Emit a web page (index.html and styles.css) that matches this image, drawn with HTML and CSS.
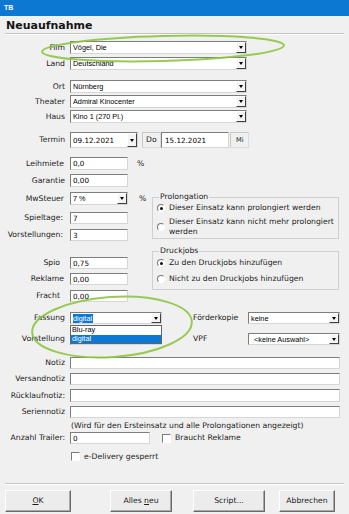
FILE: index.html
```html
<!DOCTYPE html>
<html lang="de">
<head>
<meta charset="utf-8">
<title>Neuaufnahme</title>
<link rel="stylesheet" href="styles.css">
</head>
<body>
<div class="titlebar">TB</div>
<h1 class="heading">Neuaufnahme</h1>
<div class="sep"></div>

<div class="form">
  <div class="row h13 mt6"><span class="lbl">Film</span><div class="field combo w177"><span class="val">Vögel, Die</span><span class="drop"></span></div></div>
  <div class="row h13 mt3"><span class="lbl">Land</span><div class="field combo w177"><span class="val">Deutschland</span><span class="drop"></span></div></div>

  <div class="row h13 mt10"><span class="lbl">Ort</span><div class="field combo w177"><span class="val">Nürnberg</span><span class="drop"></span></div></div>
  <div class="row h13 mt2"><span class="lbl">Theater</span><div class="field combo w177"><span class="val">Admiral Kinocenter</span><span class="drop"></span></div></div>
  <div class="row h13 mt2"><span class="lbl">Haus</span><div class="field combo w177"><span class="val">Kino 1 (270 Pl.)</span><span class="drop"></span></div></div>

  <div class="row h16 mt9">
    <span class="lbl">Termin</span>
    <div class="field combo num w68"><span class="val">09.12.2021</span><span class="drop"></span></div>
    <div class="daybox">Do</div>
    <div class="field num w68 pl3">15.12.2021</div>
    <div class="daybox mi">Mi</div>
  </div>

  <div class="section mt9">
    <div class="leftcol">
      <div class="row h13"><span class="lbl pr6">Leihmiete</span><div class="field num w58">0,0</div><span class="unit">%</span></div>
      <div class="row h13 mt4"><span class="lbl">Garantie</span><div class="field num w58">0,00</div></div>
      <div class="row h13 mt5"><span class="lbl pr6">MwSteuer</span><div class="field combo w58"><span class="val">7 %</span><span class="drop"></span></div><span class="unit u2">%</span></div>
      <div class="row h12 mt7"><span class="lbl pr7">Spieltage:</span><div class="field num w58">7</div></div>
      <div class="row h12 mt5"><span class="lbl pr7">Vorstellungen:</span><div class="field num w58">3</div></div>
      <div class="row h12 mt16"><span class="lbl pr10">Spio</span><div class="field num w58">0,75</div></div>
      <div class="row h12 mt4"><span class="lbl pr6">Reklame</span><div class="field num w58">0,00</div></div>
      <div class="row h12 mt5"><span class="lbl pr10">Fracht</span><div class="field num w58">0,00</div></div>
    </div>
    <div class="rightcol">
      <fieldset class="group">
        <legend>Prolongation</legend>
        <div class="opt first"><span class="radio on"></span><span>Dieser Einsatz kann prolongiert werden</span></div>
        <div class="opt two"><span class="radio"></span><span>Dieser Einsatz kann nicht mehr prolongiert<br>werden</span></div>
      </fieldset>
      <fieldset class="group g2">
        <legend>Druckjobs</legend>
        <div class="opt first"><span class="radio on"></span><span>Zu den Druckjobs hinzufügen</span></div>
        <div class="opt second"><span class="radio"></span><span>Nicht zu den Druckjobs hinzufügen</span></div>
      </fieldset>
    </div>
  </div>

  <div class="row h12 mt10">
    <span class="lbl">Fassung</span>
    <div class="field combo w92 anchor">
      <span class="val"><span class="sel">digital</span></span><span class="drop"></span>
      <div class="dropdown">
        <div class="item">Blu-ray</div>
        <div class="item active">digital</div>
      </div>
    </div>
    <span class="lbl2">Förderkopie</span>
    <div class="field combo w92"><span class="val">keine</span><span class="drop"></span></div>
  </div>
  <div class="row h12 mt9">
    <span class="lbl">Vorstellung</span>
    <div class="field combo w92"><span class="val"></span><span class="drop"></span></div>
    <span class="lbl2">VPF</span>
    <div class="field combo w92"><span class="val pl3">&lt;keine Auswahl&gt;</span><span class="drop"></span></div>
  </div>

  <div class="row h12 mt12"><span class="lbl">Notiz</span><div class="field w270"></div></div>
  <div class="row h12 mt4"><span class="lbl">Versandnotiz</span><div class="field w270"></div></div>
  <div class="row h13 mt4"><span class="lbl">Rücklaufnotiz:</span><div class="field w270"></div></div>
  <div class="row h12 mt4"><span class="lbl">Seriennotiz</span><div class="field w270"></div></div>
  <div class="hint mt2">(Wird für den Ersteinsatz und alle Prolongationen angezeigt)</div>
  <div class="row h12 mt1">
    <span class="lbl">Anzahl Trailer:</span><div class="field num w80">0</div>
    <span class="check cb1"></span><span class="checktext">Braucht Reklame</span>
  </div>
  <div class="row h11 mt7">
    <span class="lbl"></span><span class="check"></span><span class="checktext">e-Delivery gesperrt</span>
  </div>
</div>

<div class="sep bottom"></div>
<div class="buttons">
  <div class="btn b-ok"><span><u>O</u>K</span></div>
  <div class="btn b-neu"><span>Alles <u>n</u>eu</span></div>
  <div class="btn b-script"><span>Script...</span></div>
  <div class="btn b-cancel"><span>Abbrechen</span></div>
</div>

<svg class="annot" width="349" height="514" viewBox="0 0 349 514" aria-hidden="true">
  <ellipse cx="163" cy="48.5" rx="121" ry="12.5" transform="rotate(-1.5 163 48.5)"/>
  <ellipse cx="112" cy="327" rx="80" ry="30" transform="rotate(-4 112 327)"/>
</svg>
</body>
</html>
```

FILE: styles.css
```css
* { box-sizing: border-box; }
html, body { margin: 0; padding: 0; }
body {
  width: 349px;
  height: 514px;
  overflow: hidden;
  position: relative;
  background: #f0f0f0;
  font-family: "DejaVu Sans", Verdana, sans-serif;
  font-size: 7.7px;
  color: #222;
}

.titlebar {
  height: 16px;
  background: #0c78d2;
  color: #fff;
  font: bold 7px/8px "Liberation Sans", Arial, sans-serif;
  padding: 4px 0 0 4px;
}
.heading {
  margin: 3px 0 0 6px;
  font: bold 11px/13px "DejaVu Sans", Verdana, sans-serif;
  color: #151515;
}
.sep {
  margin: 1px 5px 0 5px;
  border-top: 1px solid #c4c4c4;
  border-bottom: 1px solid #ffffff;
}
.sep.bottom { margin-top: 21px; }

.form { display: flex; flex-direction: column; }
.row { display: flex; align-items: center; }
.h11 { height: 11px; }
.h12 { height: 12px; }
.h13 { height: 13px; }
.h16 { height: 16px; }
.mt1 { margin-top: 1px; }
.mt2 { margin-top: 2px; }
.mt3 { margin-top: 3px; }
.mt4 { margin-top: 4px; }
.mt5 { margin-top: 5px; }
.mt6 { margin-top: 6px; }
.mt7 { margin-top: 7px; }
.mt9 { margin-top: 9px; }
.mt10 { margin-top: 10px; }
.mt12 { margin-top: 12px; }
.mt16 { margin-top: 16px; }

.lbl {
  flex: none;
  width: 70px;
  padding-right: 5px;
  text-align: right;
  white-space: nowrap;
  line-height: 10px;
}
.pr6 { padding-right: 6px; }
.pr7 { padding-right: 7px; }
.pr10 { padding-right: 10px; }
.lbl2 {
  flex: none;
  width: 55px;
  margin-left: 31px;
  white-space: nowrap;
  line-height: 10px;
}

.field {
  flex: none;
  height: 100%;
  display: flex;
  align-items: center;
  background: #fff;
  border: 1px solid;
  border-color: #7d7d7d #d6d6d6 #d6d6d6 #7d7d7d;
  padding: 0 0 0 2px;
  font: 7.3px/9px "Liberation Sans", Arial, sans-serif;
  color: #000;
  white-space: nowrap;
}
.field.num { font-family: "DejaVu Sans", Verdana, sans-serif; font-size: 7.2px; }
.pl3 { padding-left: 3px; }
.w58 { width: 58px; }
.w68 { width: 68px; }
.w80 { width: 80px; }
.w92 { width: 92px; }
.w177 { width: 177px; }
.w270 { width: 270px; }

.combo .val { flex: 1; overflow: hidden; }
.drop {
  flex: none;
  position: relative;
  width: 10px;
  height: 100%;
  background: #f4f4f4;
  border-left: 1px solid #fff;
  border-top: 1px solid #fff;
  border-right: 1px solid #404040;
  border-bottom: 1px solid #404040;
  display: flex;
  align-items: center;
  justify-content: center;
}
.drop::after {
  content: "";
  width: 0;
  height: 0;
  border-left: 2.5px solid transparent;
  border-right: 2.5px solid transparent;
  border-top: 3px solid #000;
}

.daybox {
  flex: none;
  width: 19px;
  height: 16px;
  margin-left: 4px;
  padding-left: 3px;
  border: 1px solid;
  border-color: #c8c8c8 #dcdcdc #dcdcdc #c8c8c8;
  display: flex;
  align-items: center;
  line-height: 10px;
}
.daybox.mi {
  margin-left: 1px;
  padding-left: 5px;
  font-size: 6.6px;
}

.unit { margin-left: 9px; line-height: 10px; }
.unit.u2 { margin-left: 11px; }

.section { display: flex; align-items: flex-start; }
.leftcol { width: 152px; flex: none; display: flex; flex-direction: column; }
.rightcol { width: 187px; flex: none; margin-top: 35px; display: flex; flex-direction: column; }

.group {
  margin: 0;
  padding: 1px 4px 1px 4px;
  border: 1px solid #cfcfcf;
  min-width: 0;
}
.group.g2 { margin-top: 7px; padding-bottom: 5px; padding-top: 2px; }
.group legend {
  padding: 0 1px;
  margin-left: 2px;
  line-height: 10px;
}
.opt { display: flex; align-items: center; line-height: 10px; }
.opt.two { margin-top: 4px; }
.opt.second { margin-top: 6px; }
.radio {
  flex: none;
  width: 8px;
  height: 8px;
  margin-right: 4px;
  border-radius: 50%;
  background: #fff;
  border: 1px solid;
  border-color: #7a7a7a #ffffff #ffffff #7a7a7a;
  display: flex;
  align-items: center;
  justify-content: center;
}
.radio.on::after {
  content: "";
  width: 3px;
  height: 3px;
  border-radius: 50%;
  background: #111;
}

.anchor { position: relative; }
.sel { background: #0a78d7; color: #fff; padding: 0 1px 0 0; }
.dropdown {
  position: absolute;
  top: 12px;
  left: -1px;
  width: 92px;
  height: 19px;
  background: #fff;
  border: 1px solid #646464;
  z-index: 2;
}
.item {
  height: 8.5px;
  line-height: 8.5px;
  padding-left: 1px;
  font: 7.3px/8.5px "Liberation Sans", Arial, sans-serif;
  color: #000;
}
.item.active { background: #0a78d7; color: #fff; }

.hint { padding-left: 71px; line-height: 11px; height: 11px; white-space: nowrap; }

.check {
  flex: none;
  width: 9px;
  height: 9px;
  background: #fff;
  border: 1px solid;
  border-color: #7a7a7a #ffffff #ffffff #7a7a7a;
  margin-right: 4px;
  margin-left: 1px;
}
.check.cb1 { margin-left: 12px; }
.checktext { line-height: 10px; white-space: nowrap; }

.buttons { display: flex; margin-top: 5px; height: 22px; }
.btn {
  flex: none;
  height: 22px;
  background: #ececec;
  border-left: 1px solid #fdfdfd;
  border-top: 1px solid #fdfdfd;
  border-right: 1px solid #6a6a6a;
  border-bottom: 1px solid #6a6a6a;
  box-shadow: inset -1px -1px 0 #a8a8a8;
  display: flex;
  align-items: center;
  justify-content: center;
  line-height: 10px;
  color: #1a1a1a;
}
.b-ok { width: 66px; margin-left: 5px; }
.b-neu { width: 62px; margin-left: 39px; }
.b-script { width: 72px; margin-left: 21px; }
.b-cancel { width: 56px; margin-left: 14px; }

.annot {
  position: absolute;
  top: 0;
  left: 0;
  pointer-events: none;
  z-index: 5;
}
.annot ellipse {
  fill: none;
  stroke: #8cc540;
  stroke-width: 2;
  opacity: 0.9;
}
```
